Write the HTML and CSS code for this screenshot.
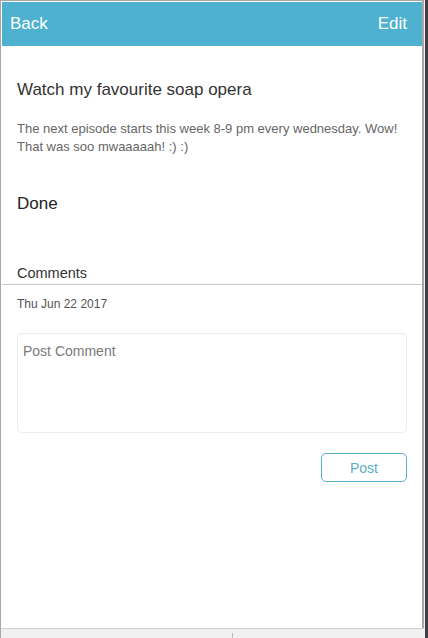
FILE: index.html
```html
<!DOCTYPE html>
<html lang="en">
<head>
    <meta charset="UTF-8">
    <meta name="viewport" content="width=device-width, initial-scale=1.0">
    <title>Task</title>
    <link rel="stylesheet" href="styles.css">
</head>
<body>
    <div class="screen">
        <div class="header">
            <span class="nav-link">Back</span>
            <span class="nav-link">Edit</span>
        </div>

        <div class="content">
            <h2 class="task-title">Watch my favourite soap opera</h2>
            <p class="task-desc">The next episode starts this week 8-9 pm every wednesday. Wow! That was soo mwaaaaah! :) :)</p>
            <p class="task-status">Done</p>

            <div class="comments-head">Comments</div>
            <div class="comments">
                <p class="comment-date">Thu Jun 22 2017</p>
                <textarea class="comment-box" placeholder="Post Comment"></textarea>
                <div class="actions">
                    <button type="button" class="post-btn">Post</button>
                </div>
            </div>
        </div>

        <div class="bottom-bar"><span class="tick"></span></div>
    </div>
</body>
</html>
```

FILE: styles.css
```css
body {
    margin: 0;
    padding: 0;
    background-color: #3f3f44;
    font-family: 'Liberation Sans', Arial, sans-serif;
}
.screen {
    width: 424px;
    height: 638px;
    box-sizing: border-box;
    background: #fff;
    border-left: 1px solid #a8a8a8;
    border-right: 2px solid #a8a8a8;
    border-top: 1px solid #a8a8a8;
    padding: 1px 0 0 1px;
    box-shadow: 1px 0 0 #f4f4f4;
    display: flex;
    flex-direction: column;
}
.header {
    height: 44px;
    background-color: #4db1cf;
    display: flex;
    align-items: center;
    justify-content: space-between;
    padding: 0 15px 0 8px;
    flex-shrink: 0;
}
.nav-link {
    color: #fff;
    font-size: 17px;
}
.content {
    flex: 1;
}
.task-title {
    margin: 34px 15px 0;
    font-size: 17px;
    line-height: 20px;
    font-weight: normal;
    color: #333;
}
.task-desc {
    margin: 20px 15px 0;
    font-size: 13px;
    line-height: 18px;
    color: #666;
}
.task-status {
    margin: 38px 15px 0;
    font-size: 17px;
    line-height: 20px;
    color: #222;
}
.comments-head {
    margin-top: 50px;
    padding: 0 15px 2px;
    font-size: 14.5px;
    line-height: 18px;
    color: #333;
    border-bottom: 1px solid #c8c8c8;
}
.comments {
    padding: 0 15px;
}
.comment-date {
    margin: 11px 0 0;
    font-size: 12px;
    line-height: 16px;
    color: #555;
}
.comment-box {
    display: block;
    width: 100%;
    height: 100px;
    box-sizing: border-box;
    margin-top: 21px;
    padding: 9px 5px;
    border: 1px solid #ececec;
    border-radius: 5px;
    resize: none;
    font-family: 'Liberation Sans', Arial, sans-serif;
    font-size: 14px;
    color: #333;
}
.comment-box::placeholder {
    color: #7a7a7a;
}
.actions {
    display: flex;
    justify-content: flex-end;
    margin-top: 20px;
}
.post-btn {
    width: 86px;
    height: 29px;
    background: #fff;
    border: 1px solid #59afc9;
    border-radius: 5px;
    color: #5aaec8;
    font-family: 'Liberation Sans', Arial, sans-serif;
    font-size: 14px;
    padding: 0;
}
.bottom-bar {
    height: 9px;
    background: #f0f0f0;
    border-top: 1px solid #cfcfcf;
    margin: 0 -2px 0 -1px;
    position: relative;
    flex-shrink: 0;
}
.tick {
    position: absolute;
    left: 231px;
    top: 4px;
    width: 1px;
    height: 5px;
    background: #bbb;
}
```
